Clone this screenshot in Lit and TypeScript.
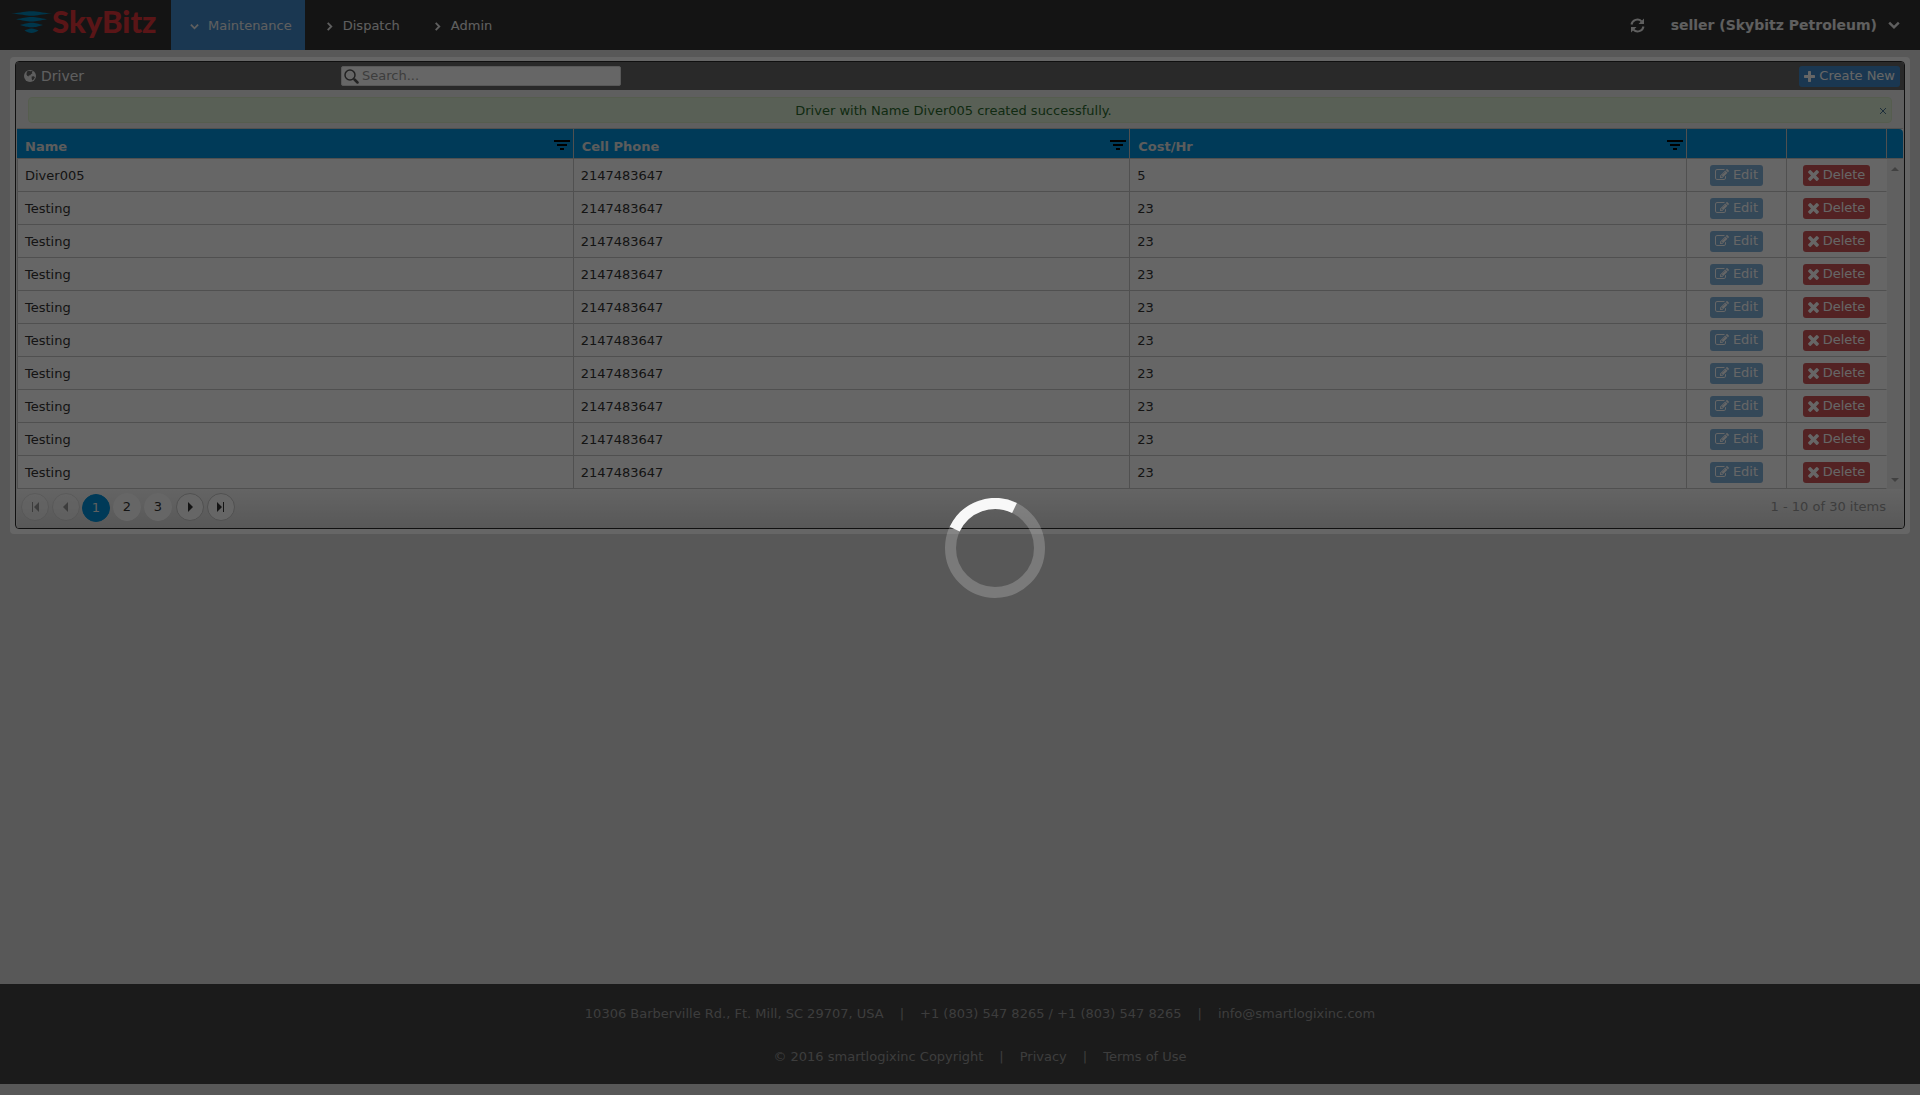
import { LitElement, html, css, svg } from "lit";
import { customElement, state } from "lit/decorators.js";

const ICONS = {
  edit: {
    box: "0 128 1792 1536",
    d: "M888 1184l116-116-152-152-116 116v56h96v96h56zm440-720q-16-16-33 1l-350 350q-17 17-1 33t33-1l350-350q17-17 1-33zm80 594v190q0 119-84.5 203.5t-203.5 84.5h-832q-119 0-203.5-84.5t-84.5-203.5v-832q0-119 84.5-203.5t203.5-84.5h832q63 0 117 25 15 7 18 23 3 17-9 29l-49 49q-14 14-32 8-23-6-45-6h-832q-66 0-113 47t-47 113v832q0 66 47 113t113 47h832q66 0 113-47t47-113v-126q0-13 9-22l64-64q15-15 35-7t20 29zm-96-738l288 288-672 672h-288v-288zm444 132l-92 92-288-288 92-92q28-28 68-28t68 28l152 152q28 28 28 68t-28 68z",
  },
  times: {
    box: "296 360 1200 1200",
    d: "M1490 1322q0 40-28 68l-136 136q-28 28-68 28t-68-28l-294-294-294 294q-28 28-68 28t-68-28l-136-136q-28-28-28-68t28-68l294-294-294-294q-28-28-28-68t28-68l136-136q28-28 68-28t68 28l294 294 294-294q28-28 68-28t68 28l136 136q28 28 28 68t-28 68l-294 294 294 294q28 28 28 68z",
  },
  plus: {
    box: "192 128 1408 1408",
    d: "M1600 736v192q0 40-28 68t-68 28h-416v416q0 40-28 68t-68 28h-192q-40 0-68-28t-28-68v-416h-416q-40 0-68-28t-28-68v-192q0-40 28-68t68-28h416v-416q0-40 28-68t68-28h192q40 0 68 28t28 68v416h416q40 0 68 28t28 68z",
  },
};

const glyph = (name: keyof typeof ICONS) =>
  html`<svg class="glyph" viewBox=${ICONS[name].box} aria-hidden="true"><path d=${ICONS[name].d} /></svg>`;

const chevron = (dir: "right" | "down", cls = "chevron") =>
  html`<svg class=${cls} viewBox="0 0 10 10" aria-hidden="true">
    <path d=${dir === "down" ? "M1 3l4 4 4-4" : "M3 1l4 4-4 4"} />
  </svg>`;

interface Driver {
  name: string;
  phone: string;
  cost: number;
}

@customElement("app-root")
export class AppRoot extends LitElement {
  @state() private drivers: Driver[] = [
    { name: "Diver005", phone: "2147483647", cost: 5 },
    ...Array.from({ length: 9 }, () => ({ name: "Testing", phone: "2147483647", cost: 23 })),
  ];
  @state() private page = 1;

  static styles = css`
    :host {
      display: block;
      font-family: Verdana, "DejaVu Sans", sans-serif;
      font-size: 13px;
      line-height: 20px;
      color: #333;
    }
    * {
      box-sizing: border-box;
    }
    button,
    input {
      font: inherit;
      margin: 0;
    }
    button {
      cursor: pointer;
    }
    a {
      color: inherit;
      text-decoration: none;
    }
    .page {
      display: flex;
      flex-direction: column;
      min-height: 100vh;
      padding-bottom: 11px;
      background: #dcdcdc;
    }

    .navbar {
      display: flex;
      align-items: stretch;
      height: 50px;
      background: #333;
      color: #eee;
    }
    .brand {
      display: flex;
      width: 171px;
      padding-left: 11px;
    }
    .brand svg {
      width: 150px;
      height: 50px;
    }
    .brand text {
      font-family: Lato, "Open Sans", sans-serif;
      font-size: 31px;
      font-weight: 900;
      fill: #e2363a;
    }
    .menu {
      display: flex;
      gap: 1px;
      margin: 0;
      padding: 0;
      list-style: none;
    }
    .menu a {
      display: flex;
      align-items: center;
      height: 50px;
      gap: 8px;
      padding: 2px 13px 0 19px;
    }
    .menu .active {
      background: #428bca;
    }
    .chevron {
      width: 9px;
      height: 9px;
      margin-right: 1px;
      fill: none;
      stroke: currentColor;
      stroke-width: 2;
    }
    .account {
      display: flex;
      align-items: center;
      gap: 26px;
      margin-left: auto;
      padding-right: 20px;
    }
    .account button {
      display: flex;
      align-items: center;
      gap: 11px;
      padding: 0;
      border: 0;
      background: none;
      color: inherit;
      font-size: 14px;
      font-weight: 700;
    }
    .refresh {
      width: 15px;
      height: 15px;
      fill: none;
      stroke: currentColor;
      stroke-width: 2;
    }
    .refresh .tip {
      fill: currentColor;
      stroke: none;
    }
    .caret {
      width: 12px;
      height: 12px;
      fill: none;
      stroke: currentColor;
      stroke-width: 2;
    }
    .glyph {
      fill: currentColor;
      width: 11px;
      height: 11px;
    }

    main {
      flex: 1;
      padding: 7px 10px 0;
    }
    .card {
      padding: 4px 5px 5px;
      border-radius: 4px;
      background: #fff;
    }
    .panel {
      overflow: hidden;
      border: 1px solid #2a2a2a;
      border-radius: 4px;
      background: #eee;
    }
    .titlebar {
      display: flex;
      align-items: center;
      justify-content: space-between;
      height: 28px;
      padding: 0 4px 0 8px;
      background: #666;
      color: #eee;
    }
    .title {
      display: flex;
      flex: 0 0 317px;
      align-items: center;
      gap: 5px;
      margin: 0;
      font-size: 14px;
      font-weight: 400;
    }
    .title svg {
      width: 12px;
      height: 12px;
    }
    .search {
      display: flex;
      align-items: center;
      gap: 3px;
      width: 280px;
      height: 20px;
      margin-right: auto;
      padding: 0 2px;
      border: 1px solid #ddd;
      border-radius: 2px;
      background: #fff;
    }
    .search svg {
      width: 15px;
      height: 15px;
    }
    .search input {
      flex: 1;
      min-width: 0;
      padding: 0;
      border: 0;
      outline: 0;
      background: none;
    }
    .search input::placeholder {
      color: #999;
      opacity: 1;
    }
    .btn {
      display: inline-flex;
      align-items: center;
      justify-content: center;
      gap: 4px;
      height: 21px;
      padding: 0 5px;
      border: 0;
      border-radius: 3px;
      color: #fff;
      vertical-align: middle;
    }
    .create {
      background: #428bca;
    }
    .edit {
      background: #428bca;
      opacity: 0.65;
    }
    .delete {
      background: #d05558;
    }
    .edit .glyph {
      width: 14px;
      height: 12px;
    }

    .alert {
      display: flex;
      align-items: center;
      height: 26px;
      margin: 7px 12px 5px;
      padding: 2px 3px 0 0;
      border: 1px solid #d6e9c6;
      border-radius: 4px;
      background: #dff0d8;
      color: #2b6a2d;
    }
    .alert p {
      flex: 1;
      margin: 0;
      text-align: center;
    }
    .alert button {
      display: flex;
      padding: 0 1px;
      border: 0;
      background: none;
    }
    .alert svg {
      width: 8px;
      height: 8px;
      fill: none;
      stroke: #4a7395;
    }

    .grid {
      margin: 0 1px;
      border-top: 1px solid #c8c8c8;
    }
    table {
      width: 100%;
      border-spacing: 0;
      table-layout: fixed;
      background: #fff;
    }
    .fixed {
      width: 100px;
    }
    .rail {
      width: 16px;
    }
    th {
      height: 30px;
      padding: 6px 3px 0 8px;
      border-right: 1px solid #c8c8c8;
      border-bottom: 1px solid #c8c8c8;
      background: #0092dc;
      color: #e6e6e6;
      text-align: left;
    }
    th:last-child {
      border-right: 0;
      border-radius: 0 4px 0 0;
    }
    .head {
      display: flex;
      align-items: center;
      justify-content: space-between;
    }
    .filter {
      display: flex;
      padding: 0 0 4px;
      border: 0;
      background: none;
    }
    .filter svg {
      width: 16px;
      height: 10px;
    }
    td {
      height: 33px;
      padding: 2px 7px 0;
      border-right: 1px solid #c8c8c8;
      border-bottom: 1px solid #c8c8c8;
    }
    td:first-child {
      border-left: 1px solid #c8c8c8;
    }
    .action {
      padding-top: 0;
      text-align: center;
    }
    .action.last {
      border-right-color: #fff;
    }
    .scroll {
      height: 330px;
      padding: 8px 0 7px;
      border: 0;
      background: #f1f1f1;
    }
    .track {
      display: flex;
      flex-direction: column;
      align-items: center;
      justify-content: space-between;
      height: 315px;
    }
    .track svg {
      width: 8px;
      height: 4px;
      fill: #a3a3a3;
    }
    .pager {
      display: flex;
      align-items: flex-start;
      justify-content: space-between;
      height: 39px;
      padding: 4px 17px 0 4px;
      background: linear-gradient(#fafafa, #dcdcdc);
      color: #999;
    }
    .pages {
      display: flex;
      gap: 3px;
    }
    .pages button {
      display: flex;
      align-items: center;
      justify-content: center;
      width: 28px;
      height: 28px;
      padding: 0;
      border: 1px solid #fff;
      border-radius: 50%;
      background: #fff;
      color: #333;
    }
    .pages .step {
      border-color: #c8c8c8;
    }
    .pages .step:disabled {
      opacity: 0.45;
    }
    .pages svg {
      width: 10px;
      height: 12px;
      fill: #333;
    }
    .pages .current {
      margin-top: 1px;
      border-color: #0092dc;
      background: #0092dc;
      color: #eee;
    }
    .numbers {
      display: flex;
      gap: 3px;
      margin: 0 1px 0 -1px;
    }
    .count {
      padding-top: 4px;
    }

    footer {
      display: flex;
      flex-direction: column;
      gap: 23px;
      align-items: center;
      height: 100px;
      padding: 20px 0 0 40px;
      background: #444;
      color: #999;
    }
    footer div {
      display: flex;
      gap: 16px;
    }

    .overlay {
      position: fixed;
      inset: 0;
      background: rgba(0, 0, 0, 0.6);
    }
    .spinner {
      position: absolute;
      top: calc(50% - 50px);
      left: calc(50% - 15px);
      width: 100px;
      height: 100px;
      fill: none;
      stroke-width: 11;
    }
  `;

  private stepIcon(d: string) {
    return html`<svg viewBox="0 0 10 12" aria-hidden="true">${svg`<path d=${d} />`}</svg>`;
  }

  private headCell(label: string) {
    return html`<th scope="col">
      <div class="head">
        <span>${label}</span>
        <button class="filter" aria-label="Filter ${label}">
          <svg viewBox="0 0 16 10"><path d="M0 0h16v2H0zM3 4h10v2H3zM6 8h4v2H6z" /></svg>
        </button>
      </div>
    </th>`;
  }

  render() {
    return html`
      <div class="page">
        <header class="navbar">
          <a class="brand" href="#" aria-label="SkyBitz">
            <svg viewBox="0 0 150 50">
              <g fill="#0088bb">
                <path d="M0 13.500C11 12.800 14 11.300 20.500 11.300S30 12.800 41 13.500C30 14.200 27 15.700 20.500 15.700S11 14.200 0 13.500z" />
                <path d="M5 19.200C12 18.300 15 17 20.500 17S29 18.300 36 19.200C29 20.300 26 21.500 20.500 21.500S12 20.300 5 19.200z" />
                <path d="M9 25C14 24 16 22.800 20.500 22.800S27 24 32 25C27 26.300 25 27.300 20.500 27.300S14 26.300 9 25z" />
                <path d="M13.500 30.500C16 29.500 18 28.500 20.500 28.500S25 29.500 27.500 30.500C25 32 23 33 20.500 33S16 32 13.500 30.500z" />
              </g>
              <text x="41" y="33">SkyBitz</text>
            </svg>
          </a>
          <nav>
            <ul class="menu">
              <li><a class="active" href="#">${chevron("down")}Maintenance</a></li>
              <li><a href="#">${chevron("right")}Dispatch</a></li>
              <li><a href="#">${chevron("right")}Admin</a></li>
            </ul>
          </nav>
          <div class="account">
            <button aria-label="Refresh">
              <svg class="refresh" viewBox="0 0 15 15" aria-hidden="true">
                <path d="M1.500 6.500A6 6 0 0 1 11.500 3.200M13.500 8.500A6 6 0 0 1 3.500 11.800" />
                <path class="tip" d="M14 .5V6H8.500zM1 14.500V9h5.500z" />
              </svg>
            </button>
            <button>seller (Skybitz Petroleum)${chevron("down", "caret")}</button>
          </div>
        </header>

        <main>
          <div class="card">
            <section class="panel">
              <div class="titlebar">
                <h1 class="title">
                  <svg viewBox="0 0 12 12" aria-hidden="true">
                    <circle cx="6" cy="6" r="6" fill="#eee" />
                    <path
                      fill="#666"
                      d="M3 1.500l2-.7 1.300.5 1.500-.4 1 .9-1 .8.600.9-1.400.5-.6 1.300-1.600.2-.3 1-1.300-.7-.8-1.500zM7.600 6.500l2.300-.3 1 1-1.100 2.100-1.600 1.200-.5-1.700z"
                    />
                  </svg>
                  Driver
                </h1>
                <label class="search">
                  <svg viewBox="0 0 15 15" aria-hidden="true">
                    <circle cx="6" cy="6" r="5" fill="none" stroke="#555" stroke-width="1.500" />
                    <path d="M10.500 10.500l3 3" stroke="#555" stroke-width="2.500" stroke-linecap="round" />
                  </svg>
                  <input type="text" placeholder="Search..." aria-label="Search" />
                </label>
                <button class="btn create">${glyph("plus")}Create New</button>
              </div>

              <div class="alert" role="status">
                <p>Driver with Name Diver005 created successfully.</p>
                <button aria-label="Close">
                  <svg viewBox="0 0 8 8"><path d="M1 1l6 6M7 1l-6 6" /></svg>
                </button>
              </div>

              <div class="grid">
                <table>
                  <colgroup>
                    <col />
                    <col />
                    <col />
                    <col class="fixed" />
                    <col class="fixed" />
                    <col class="rail" />
                  </colgroup>
                  <thead>
                    <tr>
                      ${["Name", "Cell Phone", "Cost/Hr"].map((l) => this.headCell(l))}
                      <th></th>
                      <th></th>
                      <th></th>
                    </tr>
                  </thead>
                  <tbody>
                    ${this.drivers.map(
                      (d, i) => html`<tr>
                        <td>${d.name}</td>
                        <td>${d.phone}</td>
                        <td>${d.cost}</td>
                        <td class="action"><button class="btn edit">${glyph("edit")}Edit</button></td>
                        <td class="action last"><button class="btn delete">${glyph("times")}Delete</button></td>
                        ${i === 0
                          ? html`<td class="scroll" rowspan="10">
                              <div class="track">
                                <svg viewBox="0 0 8 4"><path d="M0 4l4-4 4 4z" /></svg>
                                <svg viewBox="0 0 8 4"><path d="M0 0l4 4 4-4z" /></svg>
                              </div>
                            </td>`
                          : ""}
                      </tr>`
                    )}
                  </tbody>
                </table>
                <div class="pager">
                  <div class="pages">
                    <button class="step" disabled aria-label="First page">
                      ${this.stepIcon("M2 1h1v10H2zM9 1v10L4 6z")}
                    </button>
                    <button class="step" disabled aria-label="Previous page">${this.stepIcon("M7 1v10L2 6z")}</button>
                    <div class="numbers">
                      ${[1, 2, 3].map(
                        (n) =>
                          html`<button class=${n === this.page ? "current" : "number"} @click=${() => (this.page = n)}>
                            ${n}
                          </button>`
                      )}
                    </div>
                    <button class="step" aria-label="Next page">${this.stepIcon("M3 1v10l5-5z")}</button>
                    <button class="step" aria-label="Last page">${this.stepIcon("M1 1v10l5-5zM7 1h1v10H7z")}</button>
                  </div>
                  <span class="count">1 - 10 of 30 items</span>
                </div>
              </div>
            </section>
          </div>
        </main>

        <footer>
          <div>
            <span>10306 Barberville Rd., Ft. Mill, SC 29707, USA</span><span>|</span>
            <span>+1 (803) 547 8265 / +1 (803) 547 8265</span><span>|</span>
            <a href="mailto:info@smartlogixinc.com">info@smartlogixinc.com</a>
          </div>
          <div>
            <span>© 2016 smartlogixinc Copyright</span><span>|</span>
            <a href="#">Privacy</a><span>|</span>
            <a href="#">Terms of Use</a>
          </div>
        </footer>
      </div>

      <div class="overlay" role="progressbar" aria-label="Loading">
        <svg class="spinner" viewBox="0 0 100 100">
          <circle cx="50" cy="50" r="44.500" stroke="#fff" stroke-opacity="0.2" />
          <path d="M9.700 31.200A44.500 44.500 0 0 1 69.500 10" stroke="#f8f8f8" />
        </svg>
      </div>
    `;
  }
}
